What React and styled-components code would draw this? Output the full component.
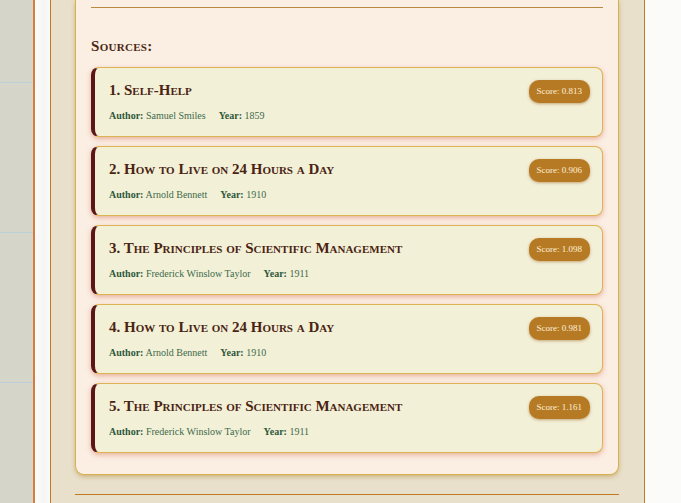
import React from 'react';
import styled, { createGlobalStyle } from 'styled-components';

const GlobalStyle = createGlobalStyle`
  html, body {
    margin: 0;
    padding: 0;
    background: #f8f8f6;
  }
  #root {
    min-height: 503px;
  }
`;

const Page = styled.div`
  display: flex;
  min-height: 503px;
  overflow: hidden;
`;

const Margin = styled.div`
  width: 33px;
  flex: none;
  background-color: #d6d5ca;
  background-image: repeating-linear-gradient(
    to bottom,
    transparent 0,
    transparent 82px,
    #bcd0d8 82px,
    #bcd0d8 83px,
    transparent 83px,
    transparent 150px
  );
`;

const Sheet = styled.div`
  flex: 1;
  display: flex;
  border-left: 2px solid #d67d3c;
  padding-left: 15px;
  background: linear-gradient(to right, #fbfbfa, #f4f4f2 10px, #fbfbfa 15px);
`;

const Frame = styled.div`
  width: 544px;
  flex: none;
  padding: 0 25px 0 24px;
  border-left: 1px solid #c27a22;
  border-right: 1px solid #c27a22;
  background: #e8e0cb;
`;

const Panel = styled.section`
  padding: 7px 15px 21px 15px;
  background: #fbeee3;
  border: 1px solid #d8b050;
  border-top: none;
  border-radius: 0 0 9px 9px;
  box-shadow: 0 2px 4px rgba(176, 128, 40, 0.45);
`;

const Rule = styled.hr`
  margin: 0;
  border: none;
  border-top: 1px solid ${p => p.$color || '#b98a44'};
`;

const Heading = styled.h3`
  margin: 28px 0 11px 0;
  font-family: "Liberation Serif", "DejaVu Serif", serif;
  font-variant: small-caps;
  font-weight: bold;
  font-size: 15px;
  letter-spacing: 0.3px;
  color: #4a2814;
  line-height: 20px;
`;

const List = styled.div`
  display: flex;
  flex-direction: column;
  gap: 9px;
`;

const Card = styled.article`
  display: flex;
  align-items: flex-start;
  justify-content: space-between;
  height: 70px;
  box-sizing: border-box;
  padding: 11px 12px 0 14px;
  background: #f3f0d8;
  border: 1px solid #dcb454;
  border-left: 4px solid #5a1716;
  border-radius: 8px;
  box-shadow: 0 2px 5px rgba(214, 118, 86, 0.5);
`;

const Info = styled.div`
  display: flex;
  flex-direction: column;
`;

const Title = styled.h4`
  margin: 0;
  font-family: "Liberation Serif", "DejaVu Serif", serif;
  font-variant: small-caps;
  font-weight: bold;
  font-size: 15px;
  letter-spacing: 0px;
  line-height: 22px;
  color: #4a2412;
`;

const Meta = styled.div`
  display: flex;
  gap: 13px;
  margin-top: 8px;
  font-family: "Liberation Serif", "DejaVu Serif", serif;
  font-size: 10px;
  line-height: 14px;
  color: #3d6a4a;
`;

const Label = styled.b`
  color: #2d583a;
`;

const Badge = styled.span`
  margin-top: 1px;
  padding: 0 8px;
  height: 23px;
  line-height: 23px;
  border-radius: 10px;
  background: #b77a24;
  color: #fbf0d8;
  font-family: "Liberation Serif", "DejaVu Serif", serif;
  font-size: 9px;
  white-space: nowrap;
  box-shadow: 0 1px 3px rgba(150, 90, 20, 0.5);
`;

const Bottom = styled.div`
  margin-top: 19px;
`;

const sources = [
  { title: '1. Self-Help', author: 'Samuel Smiles', year: 1859, score: '0.813' },
  { title: '2. How to Live on 24 Hours a Day', author: 'Arnold Bennett', year: 1910, score: '0.906' },
  { title: '3. The Principles of Scientific Management', author: 'Frederick Winslow Taylor', year: 1911, score: '1.098' },
  { title: '4. How to Live on 24 Hours a Day', author: 'Arnold Bennett', year: 1910, score: '0.981' },
  { title: '5. The Principles of Scientific Management', author: 'Frederick Winslow Taylor', year: 1911, score: '1.161' },
];

const SourceCard = ({ source }) => (
  <Card>
    <Info>
      <Title>{source.title}</Title>
      <Meta>
        <span><Label>Author:</Label> {source.author}</span>
        <span><Label>Year:</Label> {source.year}</span>
      </Meta>
    </Info>
    <Badge>Score: {source.score}</Badge>
  </Card>
);

export default function App() {
  return (
    <Page>
      <GlobalStyle />
      <Margin />
      <Sheet>
        <Frame>
          <Panel>
            <Rule />
            <Heading>Sources:</Heading>
            <List>
              {sources.map(s => <SourceCard key={s.title} source={s} />)}
            </List>
          </Panel>
          <Bottom>
            <Rule $color="#c27a22" />
          </Bottom>
        </Frame>
      </Sheet>
    </Page>
  );
}
